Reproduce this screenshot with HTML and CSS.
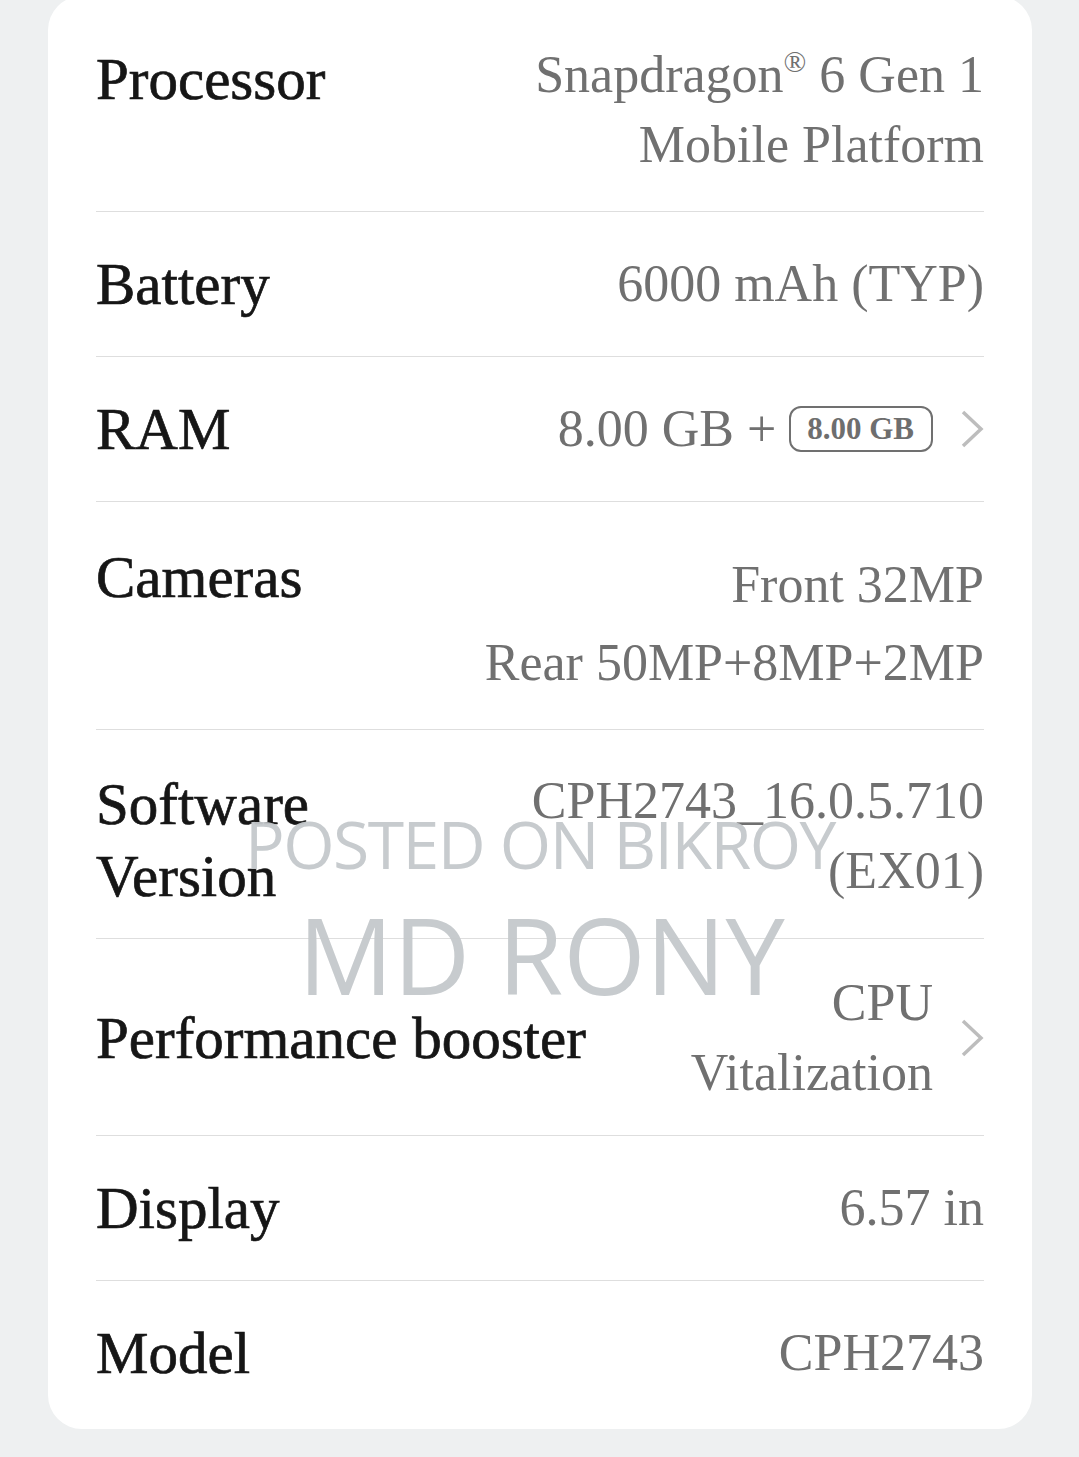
FILE: index.html
```html
<!DOCTYPE html>
<html lang="en">
<head>
  <meta charset="UTF-8">
  <meta name="viewport" content="width=device-width, initial-scale=1.0">
  <title>About phone</title>

  <link rel="stylesheet" href="styles.css">
</head>
<body>
  <div id="specs">
    <div class="row row_processor">
      <div class="label">Processor</div>
      <div class="value">
        <div>Snapdragon<sup>®</sup> 6 Gen 1</div>
        <div>Mobile Platform</div>
      </div>
    </div>

    <div class="row">
      <div class="label">Battery</div>
      <div class="value">6000 mAh (TYP)</div>
    </div>

    <div class="row">
      <div class="label">RAM</div>
      <div class="value_link">
        <div class="value">8.00 GB +</div>
        <span class="badge">8.00 GB</span>
        <svg class="chevron" viewBox="0 0 24 40"><path d="M3 3 L21 20 L3 37"/></svg>
      </div>
    </div>

    <div class="row row_cameras">
      <div class="label">Cameras</div>
      <div class="value">
        <div>Front 32MP</div>
        <div class="next">Rear 50MP+8MP+2MP</div>
      </div>
    </div>

    <div class="row row_software">
      <div class="label">Software<br>Version</div>
      <div class="value">
        <div>CPH2743_16.0.5.710</div>
        <div>(EX01)</div>
      </div>
    </div>

    <div class="row row_booster">
      <div class="label">Performance booster</div>
      <div class="value_link">
        <div class="value">
          <div>CPU</div>
          <div>Vitalization</div>
        </div>
        <svg class="chevron" viewBox="0 0 24 40"><path d="M3 3 L21 20 L3 37"/></svg>
      </div>
    </div>

    <div class="row">
      <div class="label">Display</div>
      <div class="value">6.57 in</div>
    </div>

    <div class="row row_last">
      <div class="label">Model</div>
      <div class="value">CPH2743</div>
    </div>

    <div class="mark mark_posted">POSTED ON BIKROY</div>
    <div class="mark mark_name">MD RONY</div>
  </div>
</body>
</html>
```

FILE: styles.css
```css
body{
  margin: 0;
  padding: 0 47px 0 48px;
  background-color: #eef0f1;
  font-family: "Liberation Serif", "Times New Roman", serif;
}

#specs{
  position: relative;
  margin-top: -4px;
  padding: 0 48px;
  background-color: #fff;
  border-radius: 34px;
  overflow: hidden;
}

.row{
  display: flex;
  justify-content: space-between;
  align-items: center;
  padding: 36px 0;
  border-bottom: 1px solid #dedede;
}

.label{
  font-size: 59px;
  line-height: 72px;
  color: #161616;
  -webkit-text-stroke: 0.7px #161616;
  white-space: nowrap;
}

.value{
  font-size: 52px;
  line-height: 70px;
  color: #707070;
  text-align: right;
  white-space: nowrap;
}

.value sup{
  font-size: 30px;
  line-height: 0;
  vertical-align: 20px;
}

.value_link{
  display: flex;
  align-items: center;
}

.badge{
  margin-left: 13px;
  padding: 0 17px 0 16px;
  height: 42px;
  line-height: 42px;
  border: 2.5px solid #707070;
  border-radius: 12px;
  font-size: 31px;
  font-weight: bold;
  color: #6e6e6e;
}

.chevron{
  width: 24px;
  height: 40px;
  margin-left: 27px;
  fill: none;
  stroke: #bdbdbd;
  stroke-width: 3.5px;
}

.row_processor{
  align-items: flex-start;
  padding: 44px 0 31px;
}

.row_processor .label{
  margin-top: 3px;
}

.row_cameras{
  align-items: flex-start;
  padding: 39px 0 31px;
}

.row_cameras .value{
  margin-top: 9px;
}

.row_cameras .next{
  margin-top: 8px;
}

.row_software{
  align-items: flex-start;
  padding: 36px 0 26px;
}

.row_software .label{
  margin-top: 2px;
}

.row_booster{
  padding: 29px 0 27px;
}

.row_last{
  border-bottom: none;
  padding-bottom: 40px;
}

.mark{
  position: absolute;
  font-family: "Open Sans", "Noto Sans", sans-serif;
  color: #c5c9cc;
  white-space: nowrap;
  opacity: 0.95;
}

.mark_posted{
  left: 197px;
  top: 802px;
  font-size: 66px;
  line-height: 90px;
  letter-spacing: -1.5px;
}

.mark_name{
  left: 250px;
  top: 888px;
  font-size: 106px;
  line-height: 140px;
}
```
